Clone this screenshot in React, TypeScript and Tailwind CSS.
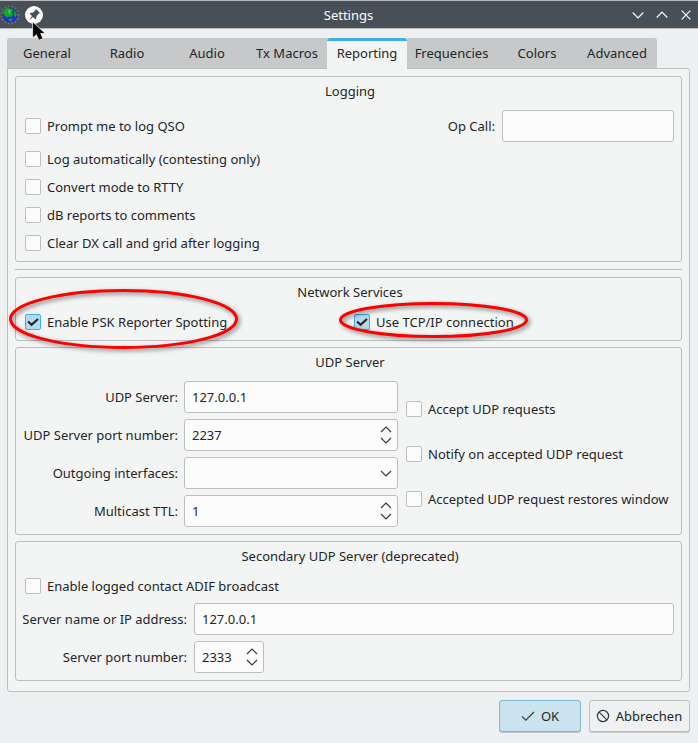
import React, { useState } from 'react';

const TABS = ['General', 'Radio', 'Audio', 'Tx Macros', 'Reporting', 'Frequencies', 'Colors', 'Advanced'];

const Chevron: React.FC<{ up?: boolean }> = ({ up }) => (
  <svg width="12" height="7" viewBox="0 0 12 7" fill="none" stroke="#31363b" strokeWidth="1.15">
    <path d={up ? 'M1 6L6 1L11 6' : 'M1 1L6 6L11 1'} />
  </svg>
);

const Check: React.FC<{ label: string; defaultChecked?: boolean }> = ({ label, defaultChecked = false }) => {
  const [checked, setChecked] = useState(defaultChecked);
  return (
    <button
      type="button"
      role="checkbox"
      aria-checked={checked}
      onClick={() => setChecked(!checked)}
      className="flex h-4 items-center gap-1.5 whitespace-nowrap"
    >
      <span
        className={
          checked
            ? 'flex size-4 items-center justify-center rounded-[2px] border border-[#3daee9] bg-[#b5daee]'
            : 'size-4 rounded-[2px] border border-[#bcbebf] bg-[#fcfcfc]'
        }
      >
        {checked && (
          <svg width="14" height="14" viewBox="0 0 14 14" fill="none" stroke="#232629" strokeWidth="2.2">
            <path d="M2 6.5L5.6 9.8L12 4" />
          </svg>
        )}
      </span>
      <span>{label}</span>
    </button>
  );
};

const Group: React.FC<{ title: string; className: string; children: React.ReactNode }> = ({
  title,
  className,
  children,
}) => (
  <section className={`rounded-[3px] border border-[#bcbebf] ${className}`}>
    <h2 className="mt-[5px] h-[18px] pl-[3px] text-center">{title}</h2>
    {children}
  </section>
);

const Field: React.FC<{ value?: string; kind?: 'text' | 'spin' | 'combo'; className: string }> = ({
  value = '',
  kind = 'text',
  className,
}) => (
  <div
    className={`flex h-8 items-center justify-between rounded-[3px] border border-[#bcbebf] bg-[#fcfcfc] pl-[7px] pr-[5px] ${className}`}
  >
    <span>{value}</span>
    {kind === 'spin' && (
      <span className="flex flex-col gap-1">
        <Chevron up />
        <Chevron />
      </span>
    )}
    {kind === 'combo' && <Chevron />}
  </div>
);

const App: React.FC = () => {
  const [active, setActive] = useState('Reporting');

  return (
    <div
      className="relative flex h-[743px] w-[698px] flex-col overflow-hidden bg-[#eeeff1] text-[13px] leading-[18px] text-[#232629]"
      style={{ fontFamily: '"Noto Sans", sans-serif' }}
    >
      {/* Title bar */}
      <header className="flex h-[29px] shrink-0 items-center border-y border-[#b7babc] bg-[#475057] text-[#fcfcfc]">
        <div className="flex w-[100px] items-center gap-[5px]">
          <svg width="20" height="20" viewBox="0 0 20 20">
            <circle cx="10" cy="10" r="8.6" fill="none" stroke="#8a6a58" strokeWidth="1.8" strokeDasharray="1.5 2" />
            <circle cx="10" cy="10" r="7.6" fill="#1c2fd0" />
            <path d="M3.6 6L7 3L11.5 3.4L13.4 5L12 7L13 9.4L11 12L8 11.4L7 12.8L3.2 9Z" fill="#14a52a" />
            <path d="M14 5L17.2 9L15.5 12.6L13.6 10Z M8 14L13 13.2L11 17Z" fill="#169b3c" />
            <path d="M7.5 5L11 5.2L9.4 9.4Z" fill="#3fd22c" />
          </svg>
          <svg width="18" height="18" viewBox="0 0 18 18">
            <circle cx="9" cy="9" r="9" fill="#fcfcfc" />
            <path
              d="M11 3L15 7L14 7.6L11.6 10L11.2 12.6L10.4 13.2L7.9 10.9L4.1 14L7 10.1L4.7 7.8L5.3 6.9L8.2 6.5L10.5 4Z"
              fill="#475057"
            />
          </svg>
        </div>
        <h1 className="flex-1 pr-px text-center">Settings</h1>
        <div className="flex w-[100px] items-center justify-end gap-3 pr-1.5">
          <svg width="12" height="12" viewBox="0 0 12 12" fill="none" stroke="#fcfcfc" strokeWidth="1.2">
            <path d="M.7 3.5L6 8.8L11.3 3.5" />
          </svg>
          <svg width="12" height="12" viewBox="0 0 12 12" fill="none" stroke="#fcfcfc" strokeWidth="1.2">
            <path d="M.7 8.5L6 3.2L11.3 8.5" />
          </svg>
          <svg width="12" height="12" viewBox="0 0 12 12" fill="none" stroke="#fcfcfc" strokeWidth="1.2">
            <path d="M1.7 1.7L10.3 10.3M10.3 1.7L1.7 10.3" />
          </svg>
        </div>
      </header>

      <nav className="z-10 -mb-px ml-[7px] mt-[9px] flex h-[31px] shrink-0">
        {TABS.map((tab) => (
          <button
            key={tab}
            type="button"
            onClick={() => setActive(tab)}
            className={`flex items-center justify-center first:rounded-tl-[3px] last:rounded-tr-[3px] ${
              tab === 'Frequencies' ? 'w-[90px] pr-px' : 'w-20'
            } ${
              tab === active
                ? 'rounded-t-[3px] border-t-[3px] border-[#3daee9] bg-[#f3f5f4] pb-1'
                : 'border-b border-b-[#bcbebf] bg-[#c6c8c9]'
            }`}
          >
            {tab}
          </button>
        ))}
      </nav>

      <main className="ml-[7px] flex h-[624px] w-[683px] shrink-0 flex-col rounded-[3px] rounded-tl-none border border-[#bcbebf] bg-[#f3f5f4] p-[7px]">
        <Group title="Logging" className="h-[186px]">
          <div className="mt-[10px] flex h-8 items-center justify-between pl-[9px] pr-[7px]">
            <Check label="Prompt me to log QSO" />
            <div className="flex items-center gap-[7px]">
              <span>Op Call:</span>
              <Field className="w-[172px]" />
            </div>
          </div>
          <div className="mt-[9px] flex flex-col gap-3 pl-[9px]">
            <Check label="Log automatically (contesting only)" />
            <Check label="Convert mode to RTTY" />
            <Check label="dB reports to comments" />
            <Check label="Clear DX call and grid after logging" />
          </div>
        </Group>

        <hr className="my-[7px] border-[#bcbebf]" />

        <Group title="Network Services" className="h-16">
          <div className="mt-[13px] grid grid-cols-[329px_1fr] pl-[9px]">
            <Check label="Enable PSK Reporter Spotting" defaultChecked />
            <Check label="Use TCP/IP connection" defaultChecked />
          </div>
        </Group>

        <Group title="UDP Server" className="mt-1.5 h-[188px]">
          <div className="mt-[10px] flex gap-2">
            <div className="grid grid-cols-[162px_214px] items-center gap-x-1.5 gap-y-1.5">
              <span className="text-right">UDP Server:</span>
              <Field value="127.0.0.1" className="w-full" />
              <span className="whitespace-nowrap text-right">UDP Server port number:</span>
              <Field value="2237" kind="spin" className="w-full" />
              <span className="text-right">Outgoing interfaces:</span>
              <Field kind="combo" className="w-full" />
              <span className="text-right">Multicast TTL:</span>
              <Field value="1" kind="spin" className="w-full" />
            </div>
            <div className="mt-5 flex flex-col gap-[29px]">
              <Check label="Accept UDP requests" />
              <Check label="Notify on accepted UDP request" />
              <Check label="Accepted UDP request restores window" />
            </div>
          </div>
        </Group>

        <Group title="Secondary UDP Server (deprecated)" className="mt-1.5 h-[140px]">
          <div className="mt-[13px] pl-[9px]">
            <Check label="Enable logged contact ADIF broadcast" />
          </div>
          <div className="mt-[9px] grid grid-cols-[172px_480px] items-center gap-x-1.5 gap-y-1.5">
            <span className="whitespace-nowrap pr-px text-right">Server name or IP address:</span>
            <Field value="127.0.0.1" className="w-full" />
            <span className="pr-px text-right">Server port number:</span>
            <Field value="2333" kind="spin" className="w-[70px]" />
          </div>
        </Group>
      </main>

      <footer className="mt-2 flex justify-end gap-2 pr-2">
        <button
          type="button"
          className="flex h-8 w-[82px] items-center justify-center gap-1.5 rounded-[3px] border border-[#7cb7d8] bg-[#cbe3ef] shadow-[0_1px_0_#bfc6ca]"
        >
          <svg width="14" height="12" viewBox="0 0 14 12" fill="none" stroke="#31363b" strokeWidth="1.1">
            <path d="M1 6.4L4.8 10.2L13 2" />
          </svg>
          OK
        </button>
        <button
          type="button"
          className="flex h-8 w-[101px] items-center justify-center gap-1.5 rounded-[3px] border border-[#bcbebf] bg-[#eff0f1] pr-px shadow-[0_1px_0_#c4c6c8]"
        >
          <svg width="14" height="14" viewBox="0 0 14 14" fill="none" stroke="#31363b" strokeWidth="1.2">
            <circle cx="7" cy="7" r="5.6" />
            <path d="M3.1 3.1L10.9 10.9" />
          </svg>
          Abbrechen
        </button>
      </footer>

      {/* Highlight rings and mouse pointer float above the window */}
      <svg
        className="pointer-events-none absolute inset-0 z-20 drop-shadow-[2px_2px_2px_rgba(0,0,0,0.5)]"
        width="698"
        height="743"
        fill="none"
        stroke="#fe0000"
        strokeWidth="3"
      >
        <ellipse cx="123.5" cy="319" rx="113" ry="28.5" />
        <ellipse cx="433.5" cy="320" rx="93" ry="16.5" />
      </svg>
      <svg className="pointer-events-none absolute left-8 top-[21px] z-20" width="14" height="20" viewBox="0 0 14 20">
        <path d="M.6 .8L.6 16.8L4.4 13.8L6.8 19.2L11 17.6L8.6 12.6L13.2 12.4Z" fill="#000" stroke="#fff" strokeWidth=".7" />
      </svg>
    </div>
  );
};

export default App;
